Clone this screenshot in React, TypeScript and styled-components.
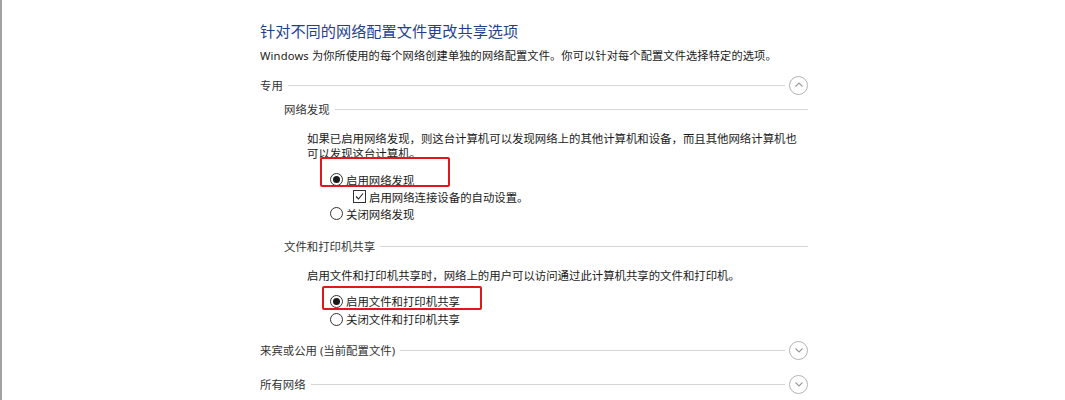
import React from 'react'
import styled, {createGlobalStyle} from 'styled-components'

const GlobalStyle = createGlobalStyle`
    body {
        margin: 0;
        background: #fff;
        font-family: "Noto Sans", "Noto Sans CJK SC", sans-serif;
        color: #1a1a1a;
    }
`

const Page = styled.div`
    height: 400px;
    border-left: 2px solid #a3a3a3;
    box-sizing: border-box;
    padding-left: 258px;
    padding-top: 21px;
`

const Content = styled.div`
    width: 548px;
    display: flex;
    flex-direction: column;
`

const Title = styled.h1`
    margin: 0;
    font-size: 15.2px;
    line-height: 20px;
    font-weight: 400;
    color: #1f3f8f;
    white-space: nowrap;
`

const Subtitle = styled.div`
    margin-top: 7px;
    font-size: 11.2px;
    letter-spacing: 0.15px;
    line-height: 16px;
    white-space: nowrap;
`

const HeaderRow = styled.div<{$indent?: number; $top: number}>`
    display: flex;
    align-items: center;
    height: 20px;
    margin-top: ${p => p.$top}px;
    padding-left: ${p => p.$indent || 0}px;
    font-size: 11.4px;
    color: #333;
    white-space: nowrap;
`

const Rule = styled.div`
    flex: 1;
    height: 1px;
    background: #d6d6d6;
    margin-left: 5px;
`

const Toggle = styled.div`
    width: 17px;
    height: 17px;
    border: 1px solid #b4b4b4;
    border-radius: 50%;
    margin-left: 4px;
    display: flex;
    align-items: center;
    justify-content: center;
    color: #9a9a9a;
`

const Para = styled.p<{$top: number}>`
    margin: ${p => p.$top}px 0 0 47px;
    font-size: 11.4px;
    line-height: 15px;
    width: 500px;
`

const Options = styled.div<{$top: number}>`
    margin-top: ${p => p.$top}px;
    padding-left: 70px;
    display: flex;
    flex-direction: column;
`

const Option = styled.label<{$h?: number; $indent?: number}>`
    position: relative;
    display: flex;
    align-items: center;
    height: ${p => p.$h || 17}px;
    padding-left: ${p => p.$indent || 0}px;
    font-size: 11.4px;
    white-space: nowrap;
`

const Radio = styled.span<{$on?: boolean}>`
    width: 11px;
    height: 11px;
    border: 1px solid #333;
    border-radius: 50%;
    margin-right: 3px;
    display: flex;
    align-items: center;
    justify-content: center;
    &::after {
        content: '';
        width: 7px;
        height: 7px;
        border-radius: 50%;
        background: ${p => (p.$on ? '#1a1a1a' : 'transparent')};
    }
`

const Check = styled.span`
    width: 11px;
    height: 11px;
    border: 1px solid #333;
    margin-right: 3px;
    display: flex;
    align-items: center;
    justify-content: center;
`

// 红色标注框
const Mark = styled.span<{$l: number; $t: number; $w: number; $h: number}>`
    position: absolute;
    left: ${p => p.$l}px;
    top: ${p => p.$t}px;
    width: ${p => p.$w}px;
    height: ${p => p.$h}px;
    border: 2.5px solid #e3171b;
    border-radius: 2px;
    box-sizing: border-box;
    pointer-events: none;
`

const Chevron = ({up}: {up?: boolean}) => (
    <svg width="10" height="10" viewBox="0 0 10 10" fill="none" stroke="currentColor" strokeWidth="1.1">
        {up ? <path d="M1.5 6.5 L5 3 L8.5 6.5"/> : <path d="M1.5 3.5 L5 7 L8.5 3.5"/>}
    </svg>
)

export default function App() {
    return (
        <Page>
            <GlobalStyle/>
            <Content>
                <Title>针对不同的网络配置文件更改共享选项</Title>
                <Subtitle>Windows 为你所使用的每个网络创建单独的网络配置文件。你可以针对每个配置文件选择特定的选项。</Subtitle>

                <HeaderRow $top={11}>
                    专用<Rule/><Toggle><Chevron up/></Toggle>
                </HeaderRow>
                <HeaderRow $top={4} $indent={24}>
                    网络发现<Rule/>
                </HeaderRow>
                <Para $top={12}>
                    如果已启用网络发现，则这台计算机可以发现网络上的其他计算机和设备，而且其他网络计算机也可以发现这台计算机。
                </Para>
                <Options $top={10}>
                    <Option>
                        <Mark $l={-10} $t={-14} $w={130} $h={30}/>
                        <Radio $on/>启用网络发现
                    </Option>
                    <Option $indent={23}>
                        <Check>
                            <svg width="9" height="9" viewBox="0 0 9 9" fill="none" stroke="#222" strokeWidth="1.1">
                                <path d="M1 4.5 L3.5 7 L8 1.5"/>
                            </svg>
                        </Check>
                        启用网络连接设备的自动设置。
                    </Option>
                    <Option>
                        <Radio/>关闭网络发现
                    </Option>
                </Options>

                <HeaderRow $top={14} $indent={24}>
                    文件和打印机共享<Rule/>
                </HeaderRow>
                <Para $top={12}>
                    启用文件和打印机共享时，网络上的用户可以访问通过此计算机共享的文件和打印机。
                </Para>
                <Options $top={9}>
                    <Option $h={18}>
                        <Mark $l={-8} $t={-6} $w={160} $h={24}/>
                        <Radio $on/>启用文件和打印机共享
                    </Option>
                    <Option $h={18}>
                        <Radio/>关闭文件和打印机共享
                    </Option>
                </Options>

                <HeaderRow $top={12}>
                    来宾或公用 (当前配置文件)<Rule/><Toggle><Chevron/></Toggle>
                </HeaderRow>
                <HeaderRow $top={14}>
                    所有网络<Rule/><Toggle><Chevron/></Toggle>
                </HeaderRow>
            </Content>
        </Page>
    )
}
